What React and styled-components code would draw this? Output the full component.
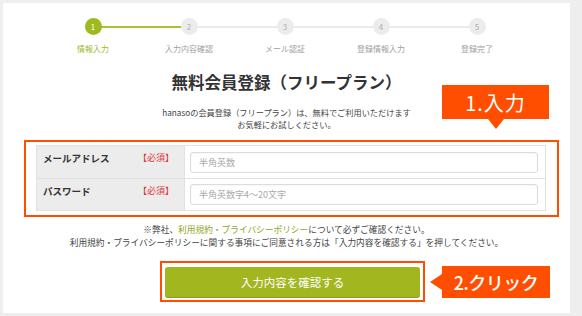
import React from 'react'
import styled, { createGlobalStyle, css } from 'styled-components'

const ORANGE = '#ff4e00'
const GREEN = '#a2b61f'

const GlobalStyle = createGlobalStyle`
    body {
        margin: 0;
        background: #eeeeee;
        font-family: "Noto Sans CJK JP", "Noto Sans", sans-serif;
    }
    * { box-sizing: border-box; }
`

const Page = styled.div`
    padding: 3px 12px 3px 3px;
`

const Panel = styled.div`
    width: 567px;
    height: 310px;
    background: #fff;
    padding-top: 15px;
`

const Stepper = styled.ol`
    display: grid;
    grid-template-columns: repeat(5, 96px);
    margin: 0 0 0 42px;
    padding: 0;
    list-style: none;
`

const Step = styled.li`
    position: relative;
    display: flex;
    flex-direction: column;
    align-items: center;
    ${props => !props.$last && css`
        &::after {
            content: '';
            position: absolute;
            top: 8px;
            left: 50%;
            width: 96px;
            height: 2px;
            background: ${props.$done ? '#a9c230' : '#ebebeb'};
        }
    `}
`

const Circle = styled.span`
    position: relative;
    z-index: 1;
    width: 17px;
    height: 17px;
    border-radius: 50%;
    display: flex;
    align-items: center;
    justify-content: center;
    font-size: 8px;
    background: ${props => props.$active ? '#9dba1e' : '#ececec'};
    color: ${props => props.$active ? '#fff' : '#b0b0b0'};
`

const StepLabel = styled.span`
    margin-top: 8px;
    font-size: 8px;
    line-height: 12px;
    color: ${props => props.$active ? '#9dba2a' : '#a0a0a0'};
`

const Title = styled.h1`
    margin: 16px 0 0;
    text-align: center;
    font-size: 16.5px;
    line-height: 22px;
    font-weight: bold;
    color: #333;
`

const Lead = styled.p`
    margin: 13px 0 0;
    text-align: center;
    font-size: 8.2px;
    line-height: 12px;
    color: #444;
`

const FormArea = styled.div`
    position: relative;
    width: 535px;
    margin: 10px 0 0 21px;
    border: 2px solid ${ORANGE};
    padding: 3px 11px 4px 10px;
`

const Callout = styled.div`
    display: flex;
    align-items: center;
    justify-content: center;
    background: ${ORANGE};
    color: #fff;
    white-space: nowrap;
`

const InputCallout = styled(Callout)`
    position: absolute;
    left: 416px;
    bottom: calc(100% + 23px);
    width: 107px;
    height: 34px;
    font-size: 20px;
    letter-spacing: 1px;
    &::after {
        content: '';
        position: absolute;
        top: 100%;
        left: 50%;
        transform: translateX(-50%);
        border-left: 8px solid transparent;
        border-right: 8px solid transparent;
        border-top: 10px solid ${ORANGE};
    }
`

const ClickCallout = styled(Callout)`
    position: relative;
    margin-left: 17px;
    width: 108px;
    height: 32px;
    font-size: 18px;
    font-weight: 500;
    letter-spacing: -0.5px;
    &::before {
        content: '';
        position: absolute;
        right: 100%;
        top: 50%;
        transform: translateY(-50%);
        border-top: 8px solid transparent;
        border-bottom: 8px solid transparent;
        border-right: 12px solid ${ORANGE};
    }
`

const Table = styled.div`
    border: 1px solid #e2e2e2;
`

const Row = styled.div`
    display: grid;
    grid-template-columns: 148px 1fr;
    height: 32px;
    & + & {
        border-top: 1px solid #e2e2e2;
    }
`

const LabelCell = styled.div`
    display: flex;
    padding: 5px 0 0 6px;
    background: #ececec;
    border-right: 1px solid #e2e2e2;
    font-size: 9.5px;
    line-height: 14px;
    font-weight: bold;
    color: #333;
`

const FieldName = styled.span`
    width: 95px;
`

const Required = styled.span`
    font-size: 9px;
    font-weight: normal;
    color: #e0363c;
`

const InputCell = styled.div`
    display: flex;
    align-items: center;
    padding: 0 7px 0 5px;
`

const TextInput = styled.input`
    width: 100%;
    height: 21px;
    border: 1px solid #dcdcdc;
    border-radius: 3px;
    padding: 0 8px;
    font-family: inherit;
    font-size: 9px;
    box-shadow: inset 0 1px 2px rgba(0, 0, 0, 0.04);
    &::placeholder { color: #aaa; }
`

const Notes = styled.p`
    margin: 6px 0 0;
    text-align: center;
    font-size: 8.7px;
    line-height: 13px;
    color: #444;
`

const Link = styled.span`
    color: #8ea71d;
`

const ButtonRow = styled.div`
    display: flex;
    align-items: center;
    margin-top: 12px;
    padding-left: 157px;
`

const ButtonFrame = styled.div`
    border: 2px solid ${ORANGE};
    padding: 4px 3px 3px;
`

const SubmitButton = styled.button`
    display: block;
    width: 255px;
    height: 30px;
    border: none;
    border-radius: 3px;
    background: ${GREEN};
    box-shadow: 0 1px 0 #8c9d17;
    color: #fff;
    font-family: inherit;
    font-size: 11.5px;
`

const steps = ['情報入力', '入力内容確認', 'メール認証', '登録情報入力', '登録完了']

const fields = [
    { name: 'メールアドレス', placeholder: '半角英数' },
    { name: 'パスワード', placeholder: '半角英数字4〜20文字' },
]

export default function App() {
    return (
        <Page>
            <GlobalStyle />
            <Panel>
                <Stepper>
                    {steps.map((label, i) => (
                        <Step key={label} $done={i === 0} $last={i === steps.length - 1}>
                            <Circle $active={i === 0}>{i + 1}</Circle>
                            <StepLabel $active={i === 0}>{label}</StepLabel>
                        </Step>
                    ))}
                </Stepper>

                <Title>無料会員登録（フリープラン）</Title>
                <Lead>
                    hanasoの会員登録（フリープラン）は、無料でご利用いただけます<br />
                    お気軽にお試しください。
                </Lead>

                <FormArea>
                    <InputCallout>1.入力</InputCallout>
                    <Table>
                        {fields.map(f => (
                            <Row key={f.name}>
                                <LabelCell>
                                    <FieldName>{f.name}</FieldName>
                                    <Required>【必須】</Required>
                                </LabelCell>
                                <InputCell>
                                    <TextInput type="text" placeholder={f.placeholder} />
                                </InputCell>
                            </Row>
                        ))}
                    </Table>
                </FormArea>

                <Notes>
                    ※弊社、<Link>利用規約・プライバシーポリシー</Link>について必ずご確認ください。<br />
                    利用規約・プライバシーポリシーに関する事項にご同意される方は「入力内容を確認する」を押してください。
                </Notes>

                <ButtonRow>
                    <ButtonFrame>
                        <SubmitButton>入力内容を確認する</SubmitButton>
                    </ButtonFrame>
                    <ClickCallout>2.クリック</ClickCallout>
                </ButtonRow>
            </Panel>
        </Page>
    )
}
